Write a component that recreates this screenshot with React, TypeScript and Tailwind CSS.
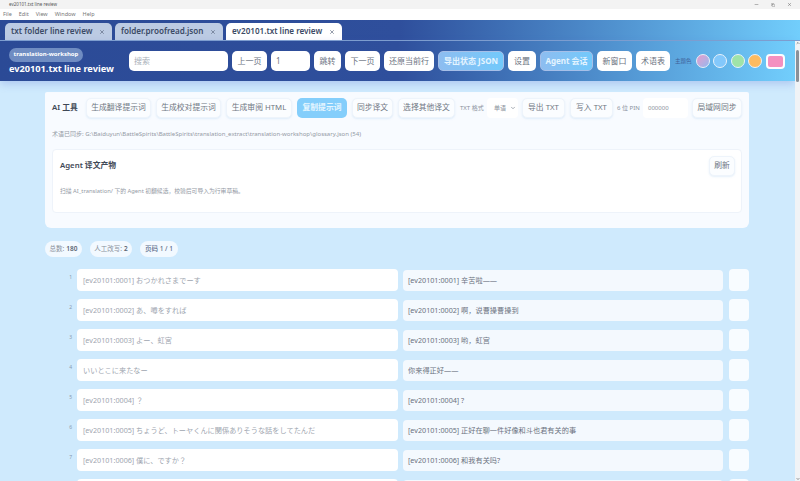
import { X, ChevronDown, ChevronUp, Minus, Copy } from 'lucide-react';

const font = "font-['Noto_Sans','Noto_Sans_CJK_SC',sans-serif]";

const rows = [
  ['[ev20101:0001] おつかれさまでーす', '[ev20101:0001] 辛苦啦——'],
  ['[ev20101:0002] あ、噂をすれば', '[ev20101:0002] 啊，说曹操曹操到'],
  ['[ev20101:0003] よー、虹宮', '[ev20101:0003] 哟，虹宫'],
  ['いいとこに来たなー', '你来得正好——'],
  ['[ev20101:0004] ？', '[ev20101:0004] ?'],
  ['[ev20101:0005] ちょうど、トーヤくんに関係ありそうな話をしてたんだ', '[ev20101:0005] 正好在聊一件好像和斗也君有关的事'],
  ['[ev20101:0006] 僕に、ですか？', '[ev20101:0006] 和我有关吗?'],
  ['', ''],
];

function Tab({ label, active, w }: { label: string; active?: boolean; w: string }) {
  return (
    <div className={`${w} h-[17px] rounded-t-[5px] flex items-center justify-between pl-[6px] pr-[7px] text-[8.1px] font-semibold text-[#3b4a66] ${active ? 'bg-white' : 'bg-[#bccbe3]'}`}>
      <span className="whitespace-nowrap">{label}</span>
      <X className="w-[6px] h-[6px] text-[#55627a]" strokeWidth={2.5} />
    </div>
  );
}

function HeadBtn({ label, w, accent }: { label: string; w: string; accent?: boolean }) {
  return (
    <div className={`${w} h-[20px] shrink-0 rounded-[5px] flex items-center justify-center text-[8px] whitespace-nowrap ${accent ? 'bg-gradient-to-r from-[#8dbdf0] to-[#72c9fb] text-[#e4f4ff] font-bold border border-[#a6bfe8]' : 'bg-white text-[#6b7280]'}`}>
      {label}
    </div>
  );
}

function ToolBtn({ label, w, accent }: { label: string; w: string; accent?: boolean }) {
  return (
    <div className={`${w} h-[20px] shrink-0 rounded-[5px] flex items-center justify-center text-[7.8px] whitespace-nowrap ${accent ? 'bg-[#84cefb] text-[#e6f6ff] font-bold' : 'bg-[#fbfdff] text-[#6f7682] border border-[#eef4fb] shadow-[0_1px_2px_rgba(170,205,240,0.3)]'}`}>
      {label}
    </div>
  );
}

function Pill({ w, label, value }: { w: string; label: string; value: string }) {
  return (
    <div className={`${w} h-[16px] rounded-full bg-[#f2f9ff] flex items-center justify-center gap-[2px] text-[6.5px] whitespace-nowrap text-[#8a919c]`}>
      <span>{label}</span>
      <span className="font-semibold text-[#5b6472]">{value}</span>
    </div>
  );
}

export default function App() {
  return (
    <div className={`${font} w-[800px] h-[481px] overflow-hidden flex flex-col bg-white`}>
      <div className="h-[9px] shrink-0 bg-[#f3f3f3] flex items-center justify-between pl-[9px] pr-[8px]">
        <span className="text-[4.5px] text-[#555]">ev20101.txt line review</span>
        <div className="flex items-center gap-[12px] text-[#555]">
          <Minus className="w-[5px] h-[5px]" />
          <Copy className="w-[4px] h-[4px]" />
          <X className="w-[5px] h-[5px]" />
        </div>
      </div>
      <div className="h-[11px] shrink-0 bg-white flex items-center gap-[7px] pl-[3px] text-[5.5px] text-[#777]">
        <span>File</span><span>Edit</span><span>View</span><span>Window</span><span>Help</span>
      </div>

      <div className="h-[21px] shrink-0 bg-gradient-to-r from-[#2b4a96] via-[#2f4f9c] via-50% to-[#72cefc] flex items-end pl-[5px] gap-[3px] border-b border-[#7fa0d0]">
        <Tab label="txt folder line review" w="w-[107px]" />
        <Tab label="folder.proofread.json" w="w-[108px]" />
        <Tab label="ev20101.txt line review" w="w-[116px]" active />
      </div>

      <div className="flex-1 min-h-0 flex">
        <div className="flex-1 min-w-0 flex flex-col bg-[#cfeafd]">
          <div className="relative h-[40px] shrink-0 bg-gradient-to-r from-[#2b4a96] via-[#2f4f9c] via-50% to-[#72cefc] flex items-center pl-[9px] shadow-[0_3px_8px_rgba(90,110,210,0.28)]">
            <div className="w-[120px] shrink-0 flex flex-col items-start">
              <span className="h-[14px] w-[74px] justify-center rounded-full bg-[#6f8cc2] text-white text-[6px] font-bold flex items-center whitespace-nowrap">translation-workshop</span>
              <span className="text-white text-[9.2px] font-bold leading-[13px] whitespace-nowrap">ev20101.txt line review</span>
            </div>
            <div className="w-[99px] h-[20px] shrink-0 rounded-[5px] bg-white text-[8px] text-[#a9afb8] flex items-center pl-[5px]">搜索</div>
            <div className="flex items-center gap-[4px] ml-[4px]">
              <HeadBtn label="上一页" w="w-[35px]" />
              <div className="w-[39px] h-[20px] shrink-0 rounded-[5px] bg-white text-[8px] text-[#6b7280] flex items-center pl-[5px]">1</div>
              <HeadBtn label="跳转" w="w-[27px]" />
              <HeadBtn label="下一页" w="w-[35px]" />
              <HeadBtn label="还原当前行" w="w-[50px]" />
              <HeadBtn label="导出状态 JSON" w="w-[66px]" accent />
              <HeadBtn label="设置" w="w-[28px]" />
              <HeadBtn label="Agent 会话" w="w-[53px]" accent />
              <HeadBtn label="新窗口" w="w-[35px]" />
              <HeadBtn label="术语表" w="w-[34px]" />
            </div>
            <span className="ml-[5px] w-[17px] shrink-0 text-[5.5px] text-[#3f5f99] whitespace-nowrap">主题色</span>
            <div className="flex items-center gap-[3.4px] ml-[4px]">
              <div className="w-[14px] h-[14px] rounded-full border border-[#e8eef8] bg-gradient-to-br from-[#e59ccb] to-[#8fb8f0]" />
              <div className="w-[14px] h-[14px] rounded-full border border-[#e8f2fb] bg-[#83c8fb]" />
              <div className="w-[14px] h-[14px] rounded-full border border-[#e8f2fb] bg-[#9fe3a8]" />
              <div className="w-[14px] h-[14px] rounded-full border border-[#e8f2fb] bg-[#fdbb5f]" />
              <div className="w-[19px] h-[15px] rounded-[4px] border-2 border-[#fbfdff] bg-[#f490c0]" />
            </div>
          </div>

          <div className="flex-1 min-h-0 overflow-hidden pt-[11px] pl-[45px] pr-[46px]">
            <div className="h-[136px] rounded-b-[6px] rounded-t-[2px] bg-[#f8fbff] px-[7px] pt-[6px]">
              <div className="flex items-center h-[20px]">
                <span className="w-[34px] shrink-0 text-[7.8px] font-semibold text-[#3f4856] whitespace-nowrap">AI 工具</span>
                <div className="flex items-center gap-[5px]">
                  <ToolBtn label="生成翻译提示词" w="w-[65px]" />
                  <ToolBtn label="生成校对提示词" w="w-[65px]" />
                  <ToolBtn label="生成审阅 HTML" w="w-[66px]" />
                  <ToolBtn label="复制提示词" w="w-[50px]" accent />
                  <ToolBtn label="同步译文" w="w-[41px]" />
                  <ToolBtn label="选择其他译文" w="w-[57px]" />
                </div>
                <span className="ml-[5px] w-[27px] shrink-0 text-[6px] text-[#8a919c] whitespace-nowrap">TXT 格式</span>
                <div className="w-[31px] h-[20px] shrink-0 rounded-[4px] bg-white flex items-center justify-between pl-[7px] pr-[2px] text-[6px] text-[#8a919c]">
                  <span>单语</span>
                  <ChevronDown className="w-[6px] h-[6px]" strokeWidth={3} />
                </div>
                <div className="flex items-center gap-[5px] ml-[4px]">
                  <ToolBtn label="导出 TXT" w="w-[43px]" />
                  <ToolBtn label="写入 TXT" w="w-[43px]" />
                </div>
                <span className="ml-[4px] w-[26px] shrink-0 text-[6px] text-[#8a919c] whitespace-nowrap">6 位 PIN</span>
                <div className="w-[45px] h-[20px] shrink-0 rounded-[4px] bg-white flex items-center pl-[5px] text-[6px] text-[#8a919c]">000000</div>
                <div className="ml-[4px]">
                  <ToolBtn label="局域网同步" w="w-[50px]" />
                </div>
              </div>
              <div className="mt-[11px] h-[10px] flex items-center text-[6px] text-[#949aa5] whitespace-nowrap">
                术语已同步: G:\Baiduyun\BattleSpirits\BattleSpirits\translation_extract\translation-workshop\glossary.json (54)
              </div>
              <div className="mt-[10px] h-[64px] rounded-[4px] bg-white border border-[#eef3fa] pl-[7px] pr-[6px] pt-[6px] flex flex-col">
                <div className="flex items-center justify-between h-[20px]">
                  <span className="text-[7.8px] font-semibold text-[#3f4856]">Agent 译文产物</span>
                  <ToolBtn label="刷新" w="w-[26px]" />
                </div>
                <div className="mt-[11px] text-[5.8px] text-[#949aa5] whitespace-nowrap">扫描 AI_translation/ 下的 Agent 初翻候选，校验后可导入为行审草稿。</div>
              </div>
            </div>

            <div className="flex items-center gap-[8px] mt-[13px] h-[16px]">
              <Pill w="w-[37px]" label="总数:" value="180" />
              <Pill w="w-[42px]" label="人工改写:" value="2" />
              <div className="w-[38px] h-[16px] rounded-full bg-[#f2f9ff] flex items-center justify-center text-[6.5px] font-medium whitespace-nowrap text-[#5b6b8a]">页码 1 / 1</div>
            </div>

            <div className="flex flex-col gap-[8px] mt-[12px]">
              {rows.map((r, i) => (
                <div key={i} className="flex items-center h-[22px] shrink-0">
                  <span className="w-[32px] shrink-0 pr-[5px] -translate-y-[2px] text-right text-[5px] text-[#8a9aae]">{i < 7 ? i + 1 : ''}</span>
                  <div className="w-[321px] h-[22px] shrink-0 rounded-[4px] bg-white flex items-center pl-[6px] text-[7.2px] text-[#a0a6b0] whitespace-nowrap font-['Noto_Sans','Noto_Sans_CJK_JP',sans-serif]">{r[0]}</div>
                  <div className="w-[320px] h-[21px] shrink-0 ml-[5px] rounded-[4px] bg-[#f4f9fe] flex items-center pl-[5px] text-[7.2px] text-[#6b7280] whitespace-nowrap">{r[1]}</div>
                  <div className="w-[20px] h-[22px] shrink-0 ml-[6px] rounded-[4px] bg-[#f8fcff]" />
                </div>
              ))}
            </div>
          </div>
        </div>

        <div className="w-[5px] shrink-0 bg-[#f0f3f6] flex flex-col items-center justify-between relative">
          <ChevronUp className="w-[4px] h-[4px] text-[#555]" strokeWidth={4} />
          <div className="absolute top-[9px] left-[1px] w-[3px] h-[32px] rounded-full bg-[#8a9098]" />
          <ChevronDown className="w-[4px] h-[4px] text-[#555]" strokeWidth={4} />
        </div>
      </div>
    </div>
  );
}
